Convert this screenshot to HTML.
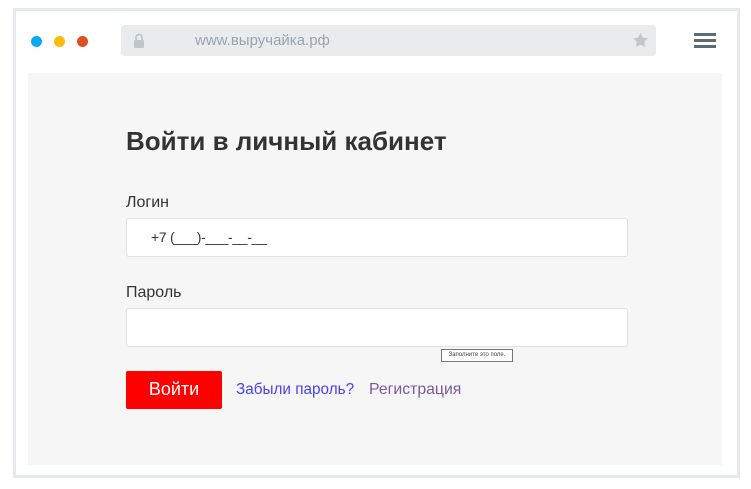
<!DOCTYPE html>
<html><head><meta charset="utf-8"><style>
*{box-sizing:border-box;margin:0;padding:0}
body{width:751px;height:489px;background:#fff;font-family:"Liberation Sans","DejaVu Sans",sans-serif;position:relative;overflow:hidden}
.frame{position:absolute;left:13px;top:8px;width:727px;height:470px;border:3px solid #e6eaee;background:#fff}
.dot{position:absolute;top:36px;width:11px;height:11px;border-radius:50%}
.url{position:absolute;left:121px;top:25px;width:535px;height:31px;background:#e9ecef;border-radius:3px}
.url span{position:absolute;left:74px;top:7px;font-size:15px;color:#9aa4ad}
.ham{position:absolute;left:694px;width:22px;height:3px;background:#5c6b78}
.panel{position:absolute;left:28px;top:73px;width:694px;height:392px;background:#f6f6f6}
h1{position:absolute;left:126px;top:126px;font-size:26px;font-weight:bold;color:#333}
.lbl{position:absolute;left:126px;font-size:16px;color:#333}
.inp{position:absolute;left:126px;width:502px;height:39px;background:#fff;border:1px solid #e2e2e2;border-radius:3px}
.btn{position:absolute;left:126px;top:371px;width:96px;height:38px;background:#f00;border-radius:2px;color:#fff;font-size:18px;text-align:center;line-height:37px}
.tip{position:absolute;left:441px;top:349px;width:72px;height:13px;border:1px solid #777;background:#fff;font-size:6px;color:#444;line-height:11px;text-align:center}
</style></head><body>
<div class="frame"></div>
<div class="dot" style="left:31px;background:#0aa9f4"></div>
<div class="dot" style="left:54px;background:#fbbd0a"></div>
<div class="dot" style="left:77px;background:#e04f1f"></div>
<div class="url">
<svg style="position:absolute;left:12px;top:8px" width="12" height="15" viewBox="0 0 12 15"><path d="M3 7V4.5a3 3 0 0 1 6 0V7" fill="none" stroke="#bfc6cc" stroke-width="1.8"/><rect x="1" y="7" width="10" height="8" rx="1" fill="#bfc6cc"/></svg>
<span>www.выручайка.рф</span>
<svg style="position:absolute;left:512px;top:8px" width="15" height="14" viewBox="0 0 24 23"><path d="M12 0l3.7 7.6 8.3 1.2-6 5.8 1.4 8.3L12 19l-7.4 3.9L6 14.6 0 8.8l8.3-1.2z" fill="#bfc6cc"/></svg>
</div>
<div class="ham" style="top:33px"></div>
<div class="ham" style="top:39px"></div>
<div class="ham" style="top:45px"></div>
<div class="panel"></div>
<h1>Войти в личный кабинет</h1>
<div class="lbl" style="top:194px">Логин</div>
<div class="inp" style="top:218px"><span style="position:absolute;left:24px;top:10px;font-size:14px;letter-spacing:-0.3px;color:#333">+7 (___)-___-__-__</span></div>
<div class="lbl" style="top:284px">Пароль</div>
<div class="inp" style="top:308px"></div>
<div class="tip">Заполните это поле.</div>
<div class="btn">Войти</div>
<div style="position:absolute;left:236px;top:381px;font-size:15.3px;color:#4b3ff2">Забыли пароль?</div>
<div style="position:absolute;left:369px;top:381px;font-size:15.8px;color:#7a5a9c">Регистрация</div>
</body></html>
